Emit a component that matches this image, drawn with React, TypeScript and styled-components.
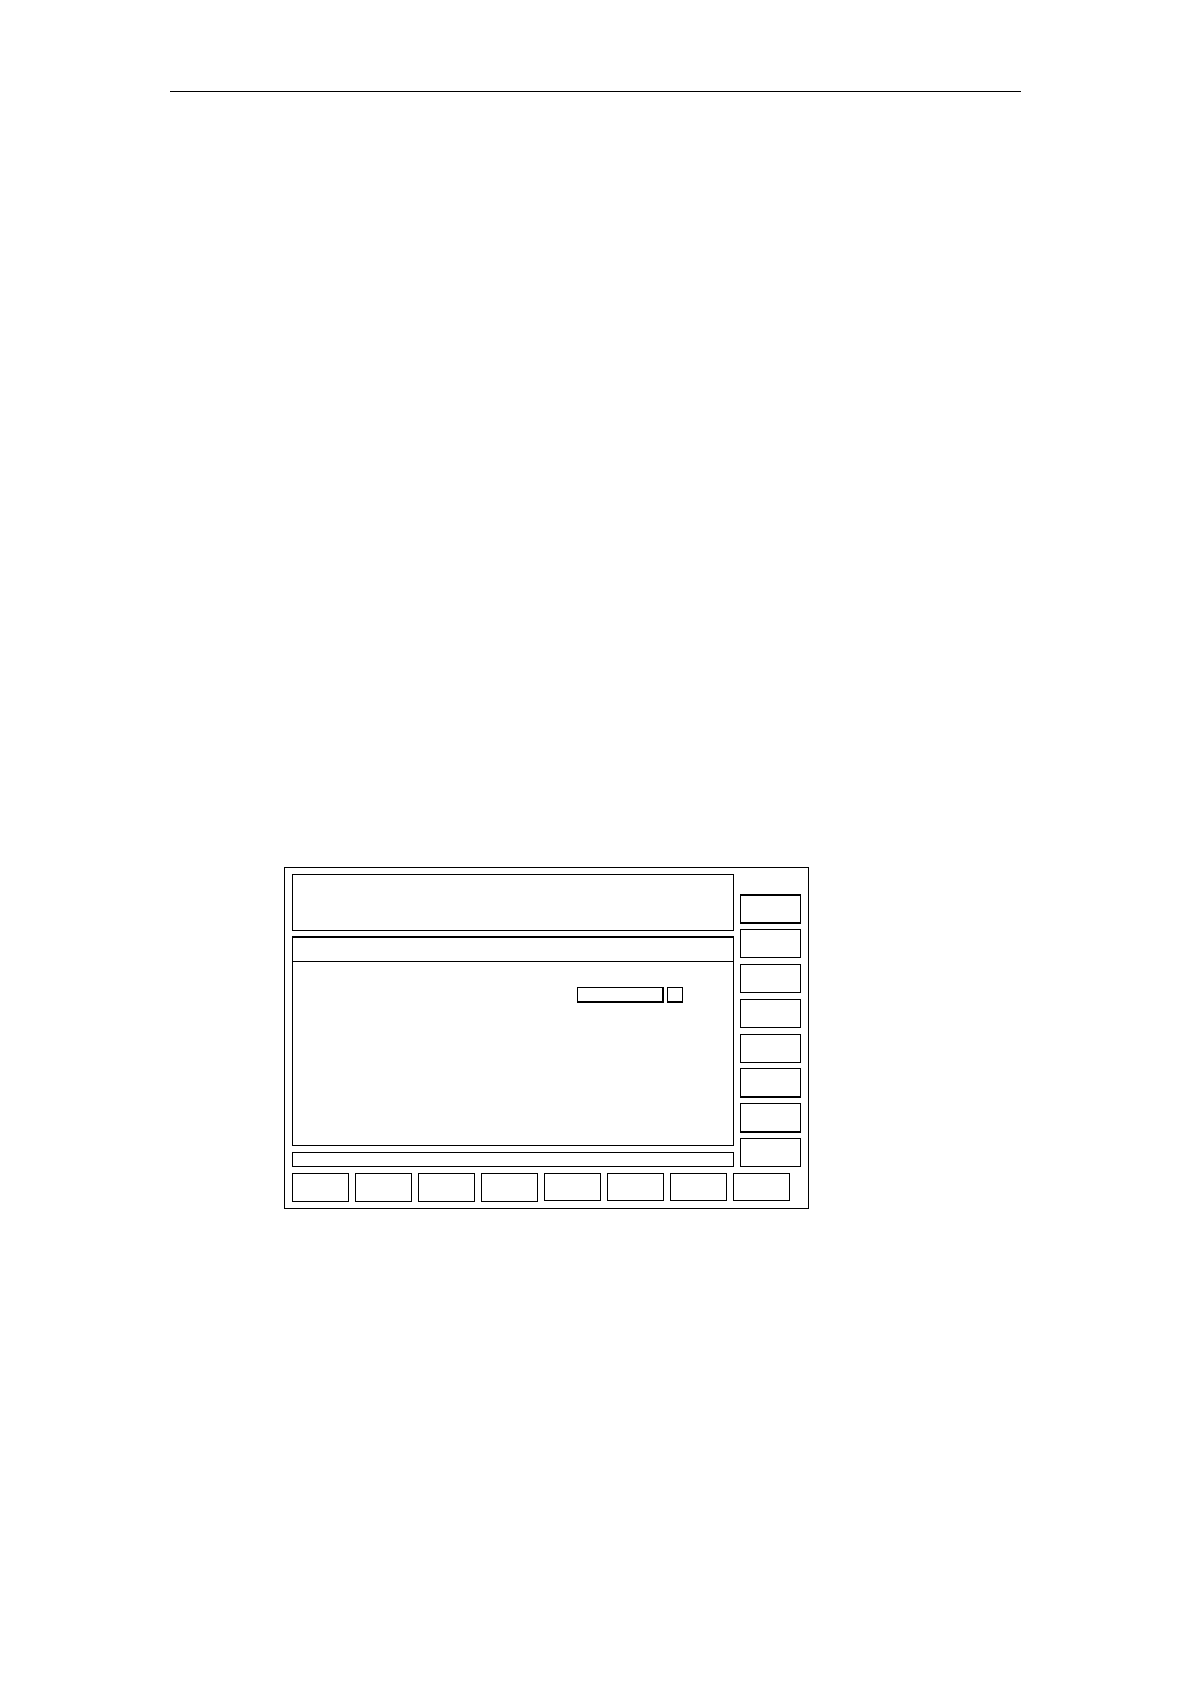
import React from "react";
import styled, { createGlobalStyle } from "styled-components";

const INK = "#000";

const GlobalStyle = createGlobalStyle`
  *, *::before, *::after { box-sizing: border-box; }
  body {
    margin: 0;
    background: #fff;
    color: ${INK};
    font-family: "Liberation Sans", Arial, sans-serif;
    font-size: 12px;
  }
`;

const Page = styled.main`
  min-height: 100vh;
  padding: 91px 169px 96px 170px;
`;

const HeaderRule = styled.hr`
  margin: 0;
  border: 0;
  border-top: 1px solid ${INK};
`;

const Panel = styled.section`
  display: grid;
  grid-template-columns: minmax(0, 1fr) 61px;
  column-gap: 6px;
  row-gap: 6px;
  max-width: 525px;
  margin: 775px 0 0 114px;
  padding: 6px 7px;
  border: 1px solid ${INK};
`;

const Screen = styled.div`
  display: flex;
  flex-direction: column;
`;

const StatusArea = styled.header`
  height: 57px;
  border: 1px solid ${INK};
`;

const WorkArea = styled.div`
  height: 210px;
  margin: 5px 0 6px;
  border: 1px solid ${INK};
  border-top-width: 2px;
`;

const TitleBar = styled.div`
  height: 24px;
  border-bottom: 1px solid ${INK};
`;

const Form = styled.form`
  display: flex;
  justify-content: flex-end;
  gap: 3px;
  padding: 25px 50px 0 0;
`;

const ValueField = styled.input`
  width: 87px;
  height: 16px;
  margin: 0;
  padding: 0 2px;
  border: 1px solid ${INK};
  border-right-width: 2px;
  border-bottom-width: 2px;
  border-radius: 0;
  background: #fff;
  font: inherit;
`;

const PickButton = styled.button`
  width: 16px;
  height: 16px;
  padding: 0;
  border: 1px solid ${INK};
  border-bottom-width: 2px;
  background: #fff;
`;

const MessageLine = styled.div`
  height: 15px;
  border: 1px solid ${INK};
`;

const SoftKey = styled.button<{ $top?: number; $bottom?: number; $height?: number }>`
  width: 100%;
  height: ${({ $height = 29 }) => $height}px;
  padding: 0;
  border: 1px solid ${INK};
  border-top-width: ${({ $top = 1 }) => $top}px;
  border-bottom-width: ${({ $bottom = 1 }) => $bottom}px;
  background: #fff;
  font: inherit;
`;

const SideKeys = styled.nav`
  display: grid;
  grid-template-rows: repeat(4, 35px) 34px repeat(2, 35px) 29px;
  align-items: start;
  padding-top: 20px;
`;

const BottomKeys = styled.nav`
  grid-column: 1 / -1;
  display: grid;
  grid-template-columns: repeat(8, minmax(0, 57px));
  align-items: start;
  column-gap: 6px;
`;

const sideKeys = [
  { top: 2, bottom: 2, height: 30 },
  {},
  {},
  {},
  {},
  { bottom: 2, height: 30 },
  { bottom: 2, height: 30 },
  {},
];

const bottomKeyHeights = [29, 29, 29, 29, 28, 28, 28, 28];

export default function App() {
  return (
    <>
      <GlobalStyle />
      <Page>
        <HeaderRule />
        <Panel aria-label="Operator panel">
          <Screen>
            <StatusArea />
            <WorkArea>
              <TitleBar />
              <Form onSubmit={(event) => event.preventDefault()}>
                <ValueField type="text" aria-label="Value" />
                <PickButton type="button" aria-label="Select" />
              </Form>
            </WorkArea>
            <MessageLine role="status" />
          </Screen>
          <SideKeys aria-label="Vertical soft keys">
            {sideKeys.map((key, i) => (
              <SoftKey
                key={i}
                type="button"
                aria-label={`Vertical soft key ${i + 1}`}
                $top={key.top}
                $bottom={key.bottom}
                $height={key.height}
              />
            ))}
          </SideKeys>
          <BottomKeys aria-label="Horizontal soft keys">
            {bottomKeyHeights.map((height, i) => (
              <SoftKey
                key={i}
                type="button"
                aria-label={`Horizontal soft key ${i + 1}`}
                $height={height}
              />
            ))}
          </BottomKeys>
        </Panel>
      </Page>
    </>
  );
}
